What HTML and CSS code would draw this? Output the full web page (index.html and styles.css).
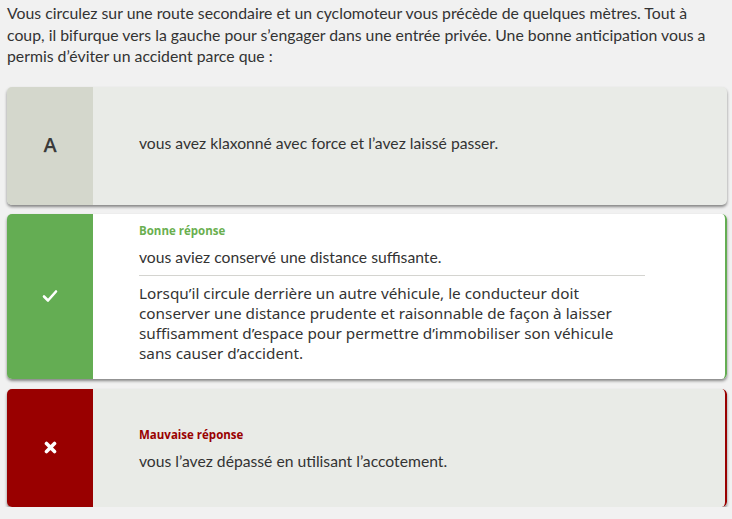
FILE: index.html
```html
<!DOCTYPE html>
<html lang="fr">
<head>
<meta charset="utf-8">
<link rel="stylesheet" href="styles.css">
</head>
<body>
<p class="question">Vous circulez sur une route secondaire et un cyclomoteur vous précède de quelques mètres. Tout à coup, il bifurque vers la gauche pour s’engager dans une entrée privée. Une bonne anticipation vous a permis d’éviter un accident parce que :</p>

<div class="card neutral">
  <div class="mark"><span class="letter">A</span></div>
  <div class="body">
    <div class="answer">vous avez klaxonné avec force et l’avez laissé passer.</div>
  </div>
</div>

<div class="card good">
  <div class="mark">
    <svg width="16" height="14" viewBox="0 0 16 14"><path d="M2 7.5 L6 11.5 L14 2.5" fill="none" stroke="#fff" stroke-width="2.6" stroke-linecap="round" stroke-linejoin="round"/></svg>
  </div>
  <div class="body">
    <div class="label">Bonne réponse</div>
    <div class="answer">vous aviez conservé une distance suffisante.</div>
    <div class="explain">Lorsqu’il circule derrière un autre véhicule, le conducteur doit conserver une distance prudente et raisonnable de façon à laisser suffisamment d’espace pour permettre d’immobiliser son véhicule sans causer d’accident.</div>
  </div>
</div>

<div class="card bad">
  <div class="mark">
    <svg width="13" height="13" viewBox="0 0 13 13"><path d="M2.5 2.5 L10.5 10.5 M10.5 2.5 L2.5 10.5" fill="none" stroke="#fff" stroke-width="3.6" stroke-linecap="round"/></svg>
  </div>
  <div class="body">
    <div class="label">Mauvaise réponse</div>
    <div class="answer">vous l’avez dépassé en utilisant l’accotement.</div>
  </div>
</div>
</body>
</html>
```

FILE: styles.css
```css
html, body {
  margin: 0;
  padding: 0;
  background: #f1f1f1;
}
body {
  font-family: Lato, "Liberation Sans", sans-serif;
  color: #333;
  padding: 0 5px 0 7px;
}
.question {
  margin: 0;
  padding: 2px 0 0 0;
  font-size: 15.8px;
  line-height: 21.5px;
  color: #333;
}
.card {
  display: flex;
  margin-top: 20px;
  border-radius: 5px;
  overflow: hidden;
  min-height: 118px;
  box-shadow: 0 2px 3px rgba(0, 0, 0, 0.45);
  background: #e9ebe7;
}
.card + .card {
  margin-top: 9px;
}
.card.bad {
  margin-top: 10px;
}
.mark {
  width: 86px;
  flex: none;
  display: flex;
  align-items: center;
  justify-content: center;
}
.neutral .mark {
  background: #d4d7cc;
}
.letter {
  font-family: "Open Sans", "Liberation Sans", sans-serif;
  font-weight: 600;
  font-size: 20px;
  color: #3a3a3a;
  margin-top: -3px;
  text-shadow: 0 1px 0 rgba(0, 0, 0, 0.15);
}
.good .mark {
  background: #64ad53;
}
.bad .mark {
  background: #990000;
}
.body {
  flex: 1;
  padding: 10px 80px 16px 46px;
  display: flex;
  flex-direction: column;
  justify-content: center;
}
.good .body {
  background: #fff;
  border-right: 2px solid #64ad53;
  border-radius: 0 5px 5px 0;
  justify-content: flex-start;
}
.bad .body {
  border-right: 2px solid #990000;
  border-radius: 0 5px 5px 0;
  padding-top: 4px;
  padding-bottom: 0;
}
.label {
  font-family: "Open Sans", sans-serif;
  font-weight: 700;
  font-size: 11.5px;
  line-height: 14px;
  margin-bottom: 9px;
}
.good .label {
  color: #6aaf50;
}
.bad .label {
  color: #990000;
}
.answer {
  font-size: 15.7px;
  line-height: 20px;
  color: #333;
}
.explain {
  margin-top: 8px;
  border-top: 1px solid #d4d4d0;
  padding-top: 7px;
  font-family: "Noto Sans", "Open Sans", sans-serif;
  font-size: 15.3px;
  line-height: 20px;
  color: #333;
}
```
